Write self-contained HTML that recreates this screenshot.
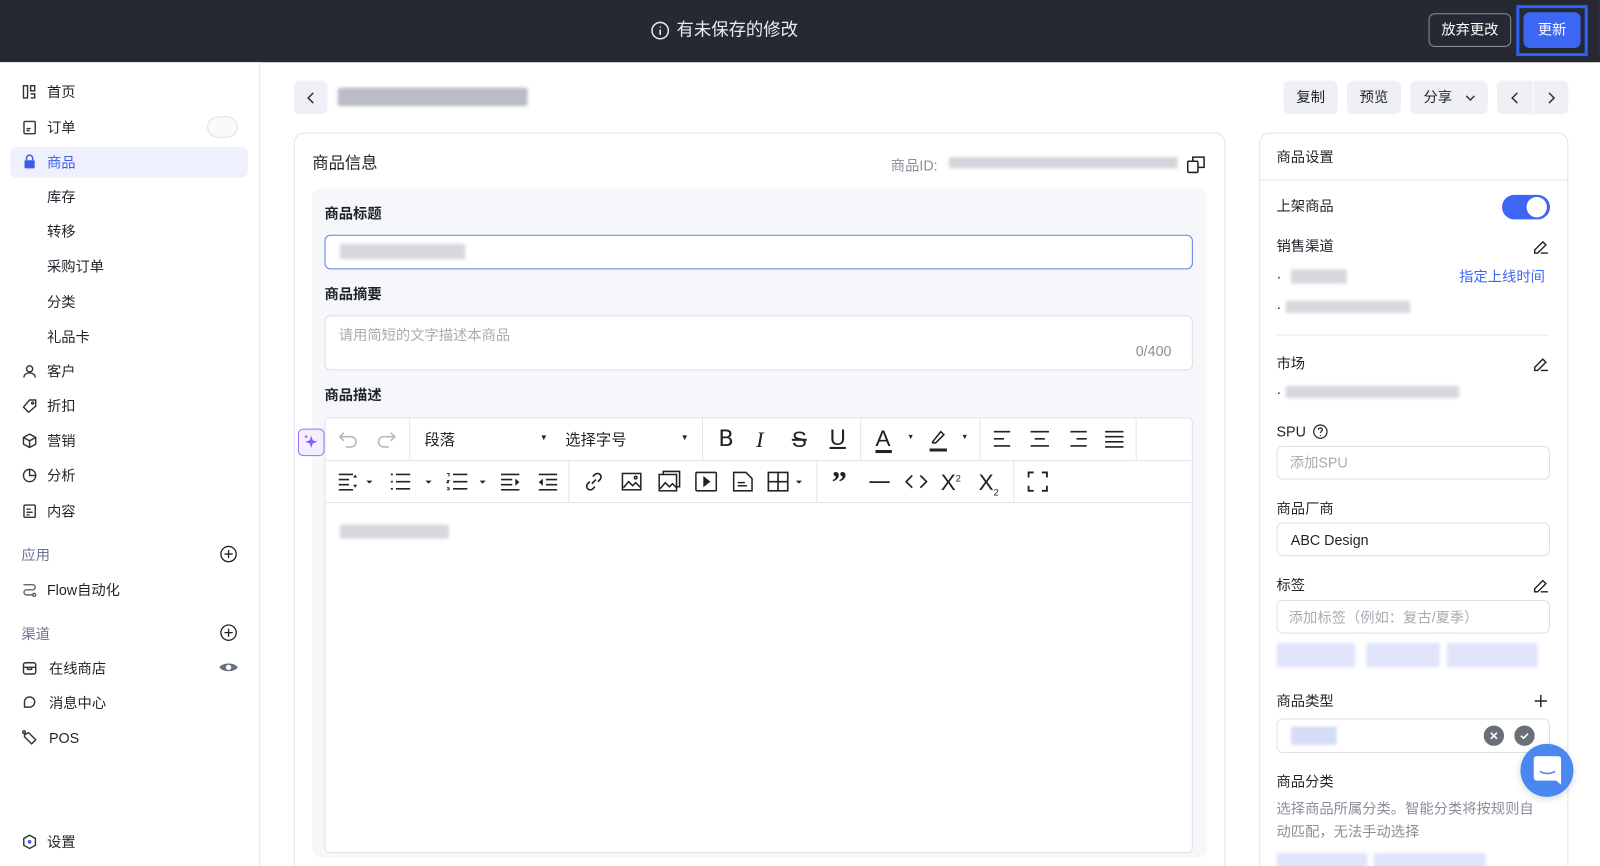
<!DOCTYPE html>
<html><head><meta charset="utf-8"><style>
*{box-sizing:border-box;margin:0;padding:0}
html,body{width:1600px;height:866px;overflow:hidden;background:#fff}
body{font-family:"Liberation Sans","Noto Sans CJK SC",sans-serif;color:#1f2329;font-size:14px}
#w{position:absolute;left:0;top:0;width:1568px;height:849px;transform:scale(1.0204);transform-origin:0 0;overflow:hidden;background:#fff}
.a{position:absolute}
.top{left:0;top:0;width:1568px;height:61px;background:#262833}
.sb{left:0;top:61px;width:255px;height:800px;border-right:1px solid #e4e6ef;background:#fff}
.it{position:absolute;left:46px;font-size:14px;line-height:16px}
.ic{position:absolute;left:21px}
.btn{position:absolute;top:79px;height:33px;background:#eef0f6;border-radius:6px;font-size:14px;line-height:33px;text-align:center;color:#1f2329}
.blur{position:absolute;background:#d6d8de;border-radius:2px;filter:blur(1.5px)}
.card{border:1px solid #e1e4ec;border-radius:10px;background:#fff}
.lbl{position:absolute;font-size:14px;font-weight:bold;line-height:16px}
.inp{position:absolute;border:1px solid #dcdfe6;border-radius:6px;background:#fff}
.tb svg{position:absolute}
.sep{position:absolute;width:1px;background:#e3e5ec}
.ph{color:#a8abb3}
.rl{position:absolute;left:1251px;font-size:14px;line-height:16px}
</style></head><body><div id="w">
<div class="a top"></div>
<svg class="a" style="left:638px;top:21px" width="18" height="18" viewBox="0 0 18 18"><circle cx="9" cy="9" r="8" fill="none" stroke="#e8e8ea" stroke-width="1.5"/><path d="M9 8v5M9 5v1" stroke="#e8e8ea" stroke-width="1.6"/></svg>
<div class="a" style="left:663px;top:20px;color:#ececef;font-size:17px;line-height:20px">有未保存的修改</div>
<div class="a" style="left:1400px;top:13px;width:81px;height:33px;border:1px solid #8a8c94;border-radius:6px;color:#fff;font-size:14px;line-height:31px;text-align:center">放弃更改</div>
<div class="a" style="left:1486px;top:5px;width:70px;height:50px;border:3px solid #2d62f6"></div>
<div class="a" style="left:1493px;top:12px;width:56px;height:35px;background:#3d67f3;border-radius:6px;color:#fff;font-size:14px;line-height:35px;text-align:center">更新</div>

<div class="a sb"></div>
<div class="a" style="left:10px;top:144px;width:233px;height:30px;background:#eef1fd;border-radius:6px"></div>
<svg class="ic" style="top:82px" width="16" height="16" viewBox="0 0 16 16" fill="none" stroke="#333" stroke-width="1.4"><rect x="2" y="2" width="4" height="12"/><rect x="9" y="2" width="4" height="5"/><path d="M9 10h4v4H9"/></svg><div class="it" style="top:82px">首页</div>
<svg class="ic" style="top:117px" width="16" height="16" viewBox="0 0 16 16" fill="none" stroke="#333" stroke-width="1.4"><rect x="2.5" y="2" width="11" height="12" rx="1"/><path d="M5 9h4M5 11h3"/></svg><div class="it" style="top:117px">订单</div>
<div class="a" style="left:203px;top:114px;width:30px;height:21px;border:1px solid #dfe1e8;border-radius:11px;background:#fafafa"></div>
<svg class="ic" style="top:151px" width="16" height="16" viewBox="0 0 16 16"><path d="M5 6V4a3 3 0 016 0v2" fill="none" stroke="#3a5ee8" stroke-width="1.5"/><rect x="3" y="6" width="10" height="8" rx="1" fill="#3a5ee8"/></svg><div class="it" style="top:151px;color:#3a5ee8">商品</div>
<div class="it" style="top:185px">库存</div>
<div class="it" style="top:219px">转移</div>
<div class="it" style="top:253px">采购订单</div>
<div class="it" style="top:288px">分类</div>
<div class="it" style="top:322px">礼品卡</div>
<svg class="ic" style="top:356px" width="16" height="16" viewBox="0 0 16 16" fill="none" stroke="#333" stroke-width="1.4"><circle cx="8" cy="5.5" r="3"/><path d="M2.5 14c0-3 2.5-4.5 5.5-4.5s5.5 1.5 5.5 4.5"/></svg><div class="it" style="top:356px">客户</div>
<svg class="ic" style="top:390px" width="16" height="16" viewBox="0 0 16 16" fill="none" stroke="#333" stroke-width="1.4"><path d="M2 9l6-7h6v6l-7 6z"/><circle cx="11" cy="5" r="1"/></svg><div class="it" style="top:390px">折扣</div>
<svg class="ic" style="top:424px" width="16" height="16" viewBox="0 0 16 16" fill="none" stroke="#333" stroke-width="1.4"><path d="M8 1.5l6 3.2v6.6L8 14.5 2 11.3V4.7zM2 4.7l6 3.3 6-3.3M8 8v6.5"/></svg><div class="it" style="top:424px">营销</div>
<svg class="ic" style="top:458px" width="16" height="16" viewBox="0 0 16 16" fill="none" stroke="#333" stroke-width="1.4"><circle cx="8" cy="8" r="6"/><path d="M8 2v6h6"/></svg><div class="it" style="top:458px">分析</div>
<svg class="ic" style="top:493px" width="16" height="16" viewBox="0 0 16 16" fill="none" stroke="#333" stroke-width="1.4"><rect x="2.5" y="2" width="11" height="12" rx="1"/><path d="M5 6h4M5 9h6M5 11.5h3"/></svg><div class="it" style="top:493px">内容</div>
<div class="it" style="left:21px;top:536px;color:#6b7394">应用</div>
<svg class="a" style="left:215px;top:534px" width="18" height="18" viewBox="0 0 18 18" fill="none" stroke="#222" stroke-width="1.3"><circle cx="9" cy="9" r="7.5"/><path d="M9 5v8M5 9h8"/></svg>
<svg class="ic" style="top:570px" width="16" height="16" viewBox="0 0 16 16" fill="none" stroke="#666" stroke-width="1.4"><path d="M2 3h9a2.5 2.5 0 010 5H5a2.5 2.5 0 000 5h7"/><circle cx="12.5" cy="13" r="1.5"/></svg><div class="it" style="top:570px">Flow自动化</div>
<div class="it" style="left:21px;top:613px;color:#6b7394">渠道</div>
<svg class="a" style="left:215px;top:611px" width="18" height="18" viewBox="0 0 18 18" fill="none" stroke="#222" stroke-width="1.3"><circle cx="9" cy="9" r="7.5"/><path d="M9 5v8M5 9h8"/></svg>
<svg class="ic" style="top:647px" width="16" height="16" viewBox="0 0 16 16" fill="none" stroke="#333" stroke-width="1.4"><rect x="2" y="2.5" width="12" height="11" rx="2"/><path d="M2 7h12M6 7v2h4V7"/></svg><div class="it" style="left:48px;top:647px">在线商店</div>
<svg class="a" style="left:214px;top:646px" width="20" height="16" viewBox="0 0 20 16"><path d="M1 8c3-5 15-5 18 0-3 5-15 5-18 0z" fill="#6b7280"/><circle cx="10" cy="8" r="2.6" fill="#fff"/></svg>
<svg class="ic" style="top:681px" width="16" height="16" viewBox="0 0 16 16" fill="none" stroke="#333" stroke-width="1.4"><path d="M3 12.5V7a5 5 0 0110 0 5 5 0 01-5 5H3z"/><path d="M6 7.5h.1M10 7.5h.1"/></svg><div class="it" style="left:48px;top:681px">消息中心</div>
<svg class="ic" style="top:715px" width="16" height="16" viewBox="0 0 16 16" fill="none" stroke="#333" stroke-width="1.4"><path d="M3 5l4-2 7 7-4 4-7-7z"/><circle cx="2.5" cy="2.5" r="1.3"/></svg><div class="it" style="left:48px;top:715px">POS</div>
<svg class="ic" style="top:817px" width="16" height="16" viewBox="0 0 16 16" fill="none" stroke="#333" stroke-width="1.4"><path d="M8 1.5l5.7 3.2v6.6L8 14.5 2.3 11.3V4.7z"/><circle cx="8" cy="8" r="1.8" fill="#3a5ee8" stroke="none"/></svg><div class="it" style="top:817px">设置</div>

<div class="btn" style="left:288px;width:33px"><svg width="10" height="12" viewBox="0 0 10 12" style="margin-top:11px"><path d="M7 1L2 6l5 5" fill="none" stroke="#333" stroke-width="1.5"/></svg></div>
<div class="blur" style="left:331px;top:86px;width:186px;height:18px;background:#b9bcc5"></div>
<div class="btn" style="left:1258px;width:53px">复制</div>
<div class="btn" style="left:1320px;width:53px">预览</div>
<div class="btn" style="left:1382px;width:76px;text-align:left;padding-left:13px">分享 <svg width="12" height="8" viewBox="0 0 12 8" style="margin-left:8px"><path d="M2 2l4 4 4-4" fill="none" stroke="#333" stroke-width="1.4"/></svg></div>
<div class="btn" style="left:1467px;width:70px"></div>
<div class="a" style="left:1502px;top:79px;width:1px;height:33px;background:#fff"></div>
<svg class="a" style="left:1480px;top:90px" width="10" height="12" viewBox="0 0 10 12"><path d="M7 1L2 6l5 5" fill="none" stroke="#333" stroke-width="1.5"/></svg>
<svg class="a" style="left:1515px;top:90px" width="10" height="12" viewBox="0 0 10 12"><path d="M3 1l5 5-5 5" fill="none" stroke="#333" stroke-width="1.5"/></svg>

<div class="a card" style="left:288px;top:130px;width:913px;height:740px"></div>
<div class="a" style="left:306px;top:151px;font-size:16px;line-height:19px">商品信息</div>
<div class="a" style="left:873px;top:152px;color:#8a8e99;font-size:14px">商品ID:</div>
<div class="blur" style="left:930px;top:154px;width:224px;height:11px;background:#d3d5dc"></div>
<svg class="a" style="left:1162px;top:151px" width="20" height="20" viewBox="0 0 20 20" fill="none" stroke="#222" stroke-width="1.5"><rect x="2" y="7" width="10" height="11" rx="1"/><path d="M7 7V3h11v10h-6"/></svg>
<div class="a" style="left:306px;top:185px;width:877px;height:655px;background:#f6f7fb;border-radius:8px"></div>
<div class="lbl" style="left:318px;top:201px">商品标题</div>
<div class="inp" style="left:318px;top:230px;width:851px;height:34px;border-color:#5f7ff1"></div>
<div class="blur" style="left:333px;top:239px;width:123px;height:15px"></div>
<div class="lbl" style="left:318px;top:280px">商品摘要</div>
<div class="inp" style="left:318px;top:309px;width:851px;height:54px"></div>
<div class="a ph" style="left:332px;top:320px;font-size:14px;line-height:16px">请用简短的文字描述本商品</div>
<div class="a" style="left:1113px;top:336px;color:#8a8e99;font-size:14px;line-height:16px">0/400</div>
<div class="lbl" style="left:318px;top:379px">商品描述</div>
<div class="a" style="left:292px;top:420px;width:26px;height:27px;border:1.5px solid #9c6cf6;border-radius:5px;background:#f4eefe"></div>
<svg class="a" style="left:296px;top:424px" width="18" height="18" viewBox="0 0 18 18" fill="#8b5cf6"><path d="M9 3l1.5 4.5L15 9l-4.5 1.5L9 15l-1.5-4.5L3 9l4.5-1.5z"/><path d="M4 2l.6 1.4L6 4l-1.4.6L4 6l-.6-1.4L2 4l1.4-.6z"/></svg>
<div class="inp tb" style="left:318px;top:409px;width:851px;height:427px;border-color:#dfe1e8;border-radius:5px">
<div class="a" style="left:0;top:41px;width:849px;height:1px;background:#e3e5ec"></div>
<div class="a" style="left:0;top:82px;width:849px;height:1px;background:#e3e5ec"></div>
<div class="sep" style="left:82px;top:0;height:41px"></div><div class="sep" style="left:369px;top:0;height:41px"></div><div class="sep" style="left:524px;top:0;height:41px"></div><div class="sep" style="left:641px;top:0;height:41px"></div><div class="sep" style="left:794px;top:0;height:41px"></div>
<div class="sep" style="left:238px;top:41px;height:41px"></div><div class="sep" style="left:481px;top:41px;height:41px"></div><div class="sep" style="left:674px;top:41px;height:41px"></div>
<svg style="left:12px;top:10px" width="22" height="20" viewBox="0 0 22 20" fill="none" stroke="#b5b8c0" stroke-width="1.6"><path d="M6 4L2 8l4 4M2 8h11a5 5 0 010 10H8"/></svg>
<svg style="left:48px;top:10px" width="22" height="20" viewBox="0 0 22 20" fill="none" stroke="#b5b8c0" stroke-width="1.6"><path d="M16 4l4 4-4 4M20 8H9a5 5 0 000 10h5"/></svg>
<div class="a" style="left:97px;top:10px;font-size:15px">段落</div><div class="a" style="left:210px;top:14px;font-size:8px">▼</div>
<div class="a" style="left:235px;top:10px;font-size:15px">选择字号</div><div class="a" style="left:348px;top:14px;font-size:8px">▼</div>
<div class="a" style="left:385px;top:8px;font-size:22px;font-family:'DejaVu Sans';color:#222">B</div>
<div class="a" style="left:422px;top:8px;font-size:22px;font-family:'Liberation Serif';font-style:italic;color:#222">I</div>
<div class="a" style="left:457px;top:8px;font-size:22px;text-decoration:line-through;color:#222">S</div>
<div class="a" style="left:494px;top:6px;font-size:22px;text-decoration:underline;color:#222">U</div>
<div class="a" style="left:539px;top:7px;font-size:22px;color:#222">A</div><div class="a" style="left:539px;top:31px;width:16px;height:3px;background:#222"></div><div class="a" style="left:570px;top:15px;font-size:7px">▼</div>
<svg style="left:591px;top:8px" width="20" height="26" viewBox="0 0 20 26" fill="none" stroke="#222" stroke-width="1.5"><path d="M4 15l8-10 3 3-8 8H4z"/><path d="M1 23h17" stroke-width="3"/></svg><div class="a" style="left:623px;top:15px;font-size:7px">▼</div>
<svg style="left:654px;top:11px" width="20" height="18" viewBox="0 0 20 18" stroke="#222" stroke-width="1.6"><path d="M1 2h16M1 9h10M1 16h16"/></svg>
<svg style="left:690px;top:11px" width="20" height="18" viewBox="0 0 20 18" stroke="#222" stroke-width="1.6"><path d="M1 2h18M5 9h10M1 16h18"/></svg>
<svg style="left:727px;top:11px" width="20" height="18" viewBox="0 0 20 18" stroke="#222" stroke-width="1.6"><path d="M3 2h16M9 9h10M3 16h16"/></svg>
<svg style="left:763px;top:11px" width="20" height="18" viewBox="0 0 20 18" stroke="#222" stroke-width="1.6"><path d="M1 2h18M1 7h18M1 12h18M1 17h18"/></svg>
<svg style="left:12px;top:53px" width="36" height="18" viewBox="0 0 36 18" stroke="#222" stroke-width="1.6" fill="#222"><path d="M1 2h14M1 7h10M1 12h10M1 17h14" fill="none"/><path d="M15 5l2-3 2 3zM15 12l2 3 2-3z" stroke="none"/><path d="M28 8l3 3 3-3z" stroke="none"/></svg>
<svg style="left:63px;top:53px" width="44" height="18" viewBox="0 0 44 18" stroke="#222" stroke-width="1.6" fill="#222"><path d="M6 2h14M6 9h14M6 16h14" fill="none"/><path d="M1 2h2M1 9h2M1 16h2" fill="none"/><path d="M35 8l3 3 3-3z" stroke="none"/></svg>
<svg style="left:118px;top:53px" width="40" height="18" viewBox="0 0 40 18" stroke="#222" stroke-width="1.6" fill="#222"><path d="M7 2h14M7 9h14M7 16h14" fill="none"/><path d="M1 1h2v3M1 8h2l-2 2h2M1 15h2v2H1" fill="none" stroke-width="1"/><path d="M33 8l3 3 3-3z" stroke="none"/></svg>
<svg style="left:171px;top:53px" width="20" height="18" viewBox="0 0 20 18" stroke="#222" stroke-width="1.6" fill="#222"><path d="M1 2h18M1 7h11M1 12h11M1 17h18" fill="none"/><path d="M15 6l4 3.5-4 3.5z" stroke="none"/></svg>
<svg style="left:208px;top:53px" width="20" height="18" viewBox="0 0 20 18" stroke="#222" stroke-width="1.6" fill="#222"><path d="M1 2h18M8 7h11M8 12h11M1 17h18" fill="none"/><path d="M5 6L1 9.5 5 13z" stroke="none"/></svg>
<svg style="left:253px;top:52px" width="20" height="20" viewBox="0 0 20 20" fill="none" stroke="#222" stroke-width="1.6"><path d="M8 12l4-4M9 5l2-2a3.5 3.5 0 015 5l-2 2M11 15l-2 2a3.5 3.5 0 01-5-5l2-2"/></svg>
<svg style="left:290px;top:53px" width="20" height="18" viewBox="0 0 20 18" fill="none" stroke="#222" stroke-width="1.5"><rect x="1" y="1" width="18" height="16"/><path d="M2 15l5-6 4 4 3-3 5 5"/><circle cx="14" cy="5" r="1.3"/></svg>
<svg style="left:326px;top:51px" width="22" height="21" viewBox="0 0 22 21" fill="none" stroke="#222" stroke-width="1.5"><path d="M5 4V1h16v15h-3"/><rect x="1" y="4" width="17" height="16"/><path d="M2 18l5-6 4 4 3-3 4 4"/></svg>
<svg style="left:362px;top:52px" width="22" height="20" viewBox="0 0 22 20" fill="none" stroke="#222" stroke-width="1.5"><rect x="1" y="1" width="20" height="18" rx="1"/><path d="M9 6v8l5-4z" fill="#222"/></svg>
<svg style="left:399px;top:52px" width="20" height="20" viewBox="0 0 20 20" fill="none" stroke="#222" stroke-width="1.5"><path d="M1 1h12l6 6v12H1z"/><path d="M5 11h7M5 14h9"/></svg>
<svg style="left:433px;top:52px" width="40" height="20" viewBox="0 0 40 20" fill="none" stroke="#222" stroke-width="1.6"><rect x="1" y="1" width="19" height="18"/><path d="M10.5 1v18M1 10h19"/><path d="M28 9l3 3 3-3z" fill="#222" stroke="none"/></svg>
<div class="a" style="left:496px;top:48px;font-size:30px;font-weight:bold;font-family:'Liberation Serif';color:#222;line-height:30px">”</div>
<svg style="left:533px;top:61px" width="20" height="3" viewBox="0 0 20 3"><path d="M0 1.5h20" stroke="#222" stroke-width="1.8"/></svg>
<svg style="left:567px;top:55px" width="24" height="14" viewBox="0 0 24 14" fill="none" stroke="#222" stroke-width="1.6"><path d="M8 1L2 7l6 6M16 1l6 6-6 6"/></svg>
<div class="a" style="left:603px;top:50px;font-size:22px;color:#222">X<sup style="font-size:9px">2</sup></div>
<div class="a" style="left:640px;top:50px;font-size:22px;color:#222">X<sub style="font-size:9px">2</sub></div>
<svg style="left:687px;top:51px" width="22" height="22" viewBox="0 0 22 22" fill="none" stroke="#222" stroke-width="1.8"><path d="M2 7V2h5M15 2h5v5M20 15v5h-5M7 20H2v-5"/></svg>
</div>
<div class="blur" style="left:333px;top:514px;width:107px;height:14px"></div>

<div class="a card" style="left:1234px;top:130px;width:303px;height:740px"></div>
<div class="a" style="left:1235px;top:176px;width:301px;height:1px;background:#e3e5ec"></div>
<div class="rl" style="top:146px">商品设置</div>
<div class="rl" style="top:194px">上架商品</div>
<div class="a" style="left:1472px;top:191px;width:47px;height:24px;background:#3d67f3;border-radius:12px"></div>
<div class="a" style="left:1496px;top:193px;width:20px;height:20px;background:#fff;border-radius:50%"></div>
<div class="rl" style="top:233px">销售渠道</div>
<svg class="a" style="left:1502px;top:234px" width="16" height="16" viewBox="0 0 16 16" fill="none" stroke="#222" stroke-width="1.4"><path d="M2 11l8-8 3 3-8 8H2zM8 14h7"/></svg>
<div class="a" style="left:1251px;top:263px">·</div><div class="blur" style="left:1265px;top:264px;width:55px;height:14px"></div>
<div class="a" style="left:1430px;top:263px;color:#3d67f3;font-size:14px;line-height:16px">指定上线时间</div>
<div class="a" style="left:1251px;top:293px">·</div><div class="blur" style="left:1260px;top:295px;width:122px;height:12px"></div>
<div class="a" style="left:1251px;top:328px;width:267px;height:1px;background:#e8e9ef"></div>
<div class="rl" style="top:348px">市场</div>
<svg class="a" style="left:1502px;top:349px" width="16" height="16" viewBox="0 0 16 16" fill="none" stroke="#222" stroke-width="1.4"><path d="M2 11l8-8 3 3-8 8H2zM8 14h7"/></svg>
<div class="a" style="left:1251px;top:376px">·</div><div class="blur" style="left:1260px;top:378px;width:170px;height:12px"></div>
<div class="rl" style="top:415px">SPU</div>
<svg class="a" style="left:1286px;top:415px" width="16" height="16" viewBox="0 0 16 16" fill="none" stroke="#222" stroke-width="1.2"><circle cx="8" cy="8" r="6.5"/><path d="M6 6.3a2 2 0 114 0c0 1.3-2 1.5-2 3M8 11.3v.8"/></svg>
<div class="inp" style="left:1251px;top:437px;width:268px;height:33px"></div>
<div class="a ph" style="left:1264px;top:445px;font-size:14px;line-height:16px">添加SPU</div>
<div class="rl" style="top:490px">商品厂商</div>
<div class="inp" style="left:1251px;top:512px;width:268px;height:33px"></div>
<div class="a" style="left:1265px;top:521px;font-size:14px;line-height:16px">ABC Design</div>
<div class="rl" style="top:565px">标签</div>
<svg class="a" style="left:1502px;top:566px" width="16" height="16" viewBox="0 0 16 16" fill="none" stroke="#222" stroke-width="1.4"><path d="M2 11l8-8 3 3-8 8H2zM8 14h7"/></svg>
<div class="inp" style="left:1251px;top:588px;width:268px;height:33px"></div>
<div class="a ph" style="left:1263px;top:597px;font-size:14px;line-height:16px">添加标签（例如：复古/夏季）</div>
<div class="blur" style="left:1251px;top:630px;width:77px;height:24px;background:#dfe4fb"></div>
<div class="blur" style="left:1339px;top:630px;width:72px;height:24px;background:#dfe4fb"></div>
<div class="blur" style="left:1418px;top:630px;width:89px;height:24px;background:#dfe4fb"></div>
<div class="rl" style="top:679px">商品类型</div>
<svg class="a" style="left:1503px;top:680px" width="14" height="14" viewBox="0 0 14 14" stroke="#222" stroke-width="1.4"><path d="M7 1v12M1 7h12"/></svg>
<div class="inp" style="left:1251px;top:704px;width:268px;height:34px"></div>
<div class="blur" style="left:1265px;top:712px;width:45px;height:18px;background:#d5dcf8"></div>
<svg class="a" style="left:1454px;top:711px" width="20" height="20" viewBox="0 0 20 20"><circle cx="10" cy="10" r="10" fill="#6b6f7a"/><path d="M7 7l6 6M13 7l-6 6" stroke="#fff" stroke-width="1.6"/></svg>
<svg class="a" style="left:1484px;top:711px" width="20" height="20" viewBox="0 0 20 20"><circle cx="10" cy="10" r="10" fill="#6b6f7a"/><path d="M6.5 10l2.5 2.5 4.5-4.5" fill="none" stroke="#fff" stroke-width="1.6"/></svg>
<div class="rl" style="top:758px">商品分类</div>
<div class="a" style="left:1251px;top:781px;color:#8a8e99;font-size:14px;line-height:23px;width:265px">选择商品所属分类。智能分类将按规则自动匹配，无法手动选择</div>
<div class="blur" style="left:1251px;top:836px;width:89px;height:20px;background:#dfe4fb"></div>
<div class="blur" style="left:1346px;top:836px;width:110px;height:20px;background:#dfe4fb"></div>
<div class="a" style="left:1490px;top:729px;width:52px;height:52px;border-radius:50%;background:#4a88f0;box-shadow:0 2px 8px rgba(0,0,0,.15)"></div>
<svg class="a" style="left:1503px;top:741px" width="27" height="28" viewBox="0 0 27 28"><path d="M3 0h21a3 3 0 013 3v25l-5-4H3a3 3 0 01-3-3V3a3 3 0 013-3z" fill="#fff"/><path d="M6 15q7.5 4 15 0" fill="none" stroke="#4a88f0" stroke-width="1.6"/></svg>
</div></body></html>
